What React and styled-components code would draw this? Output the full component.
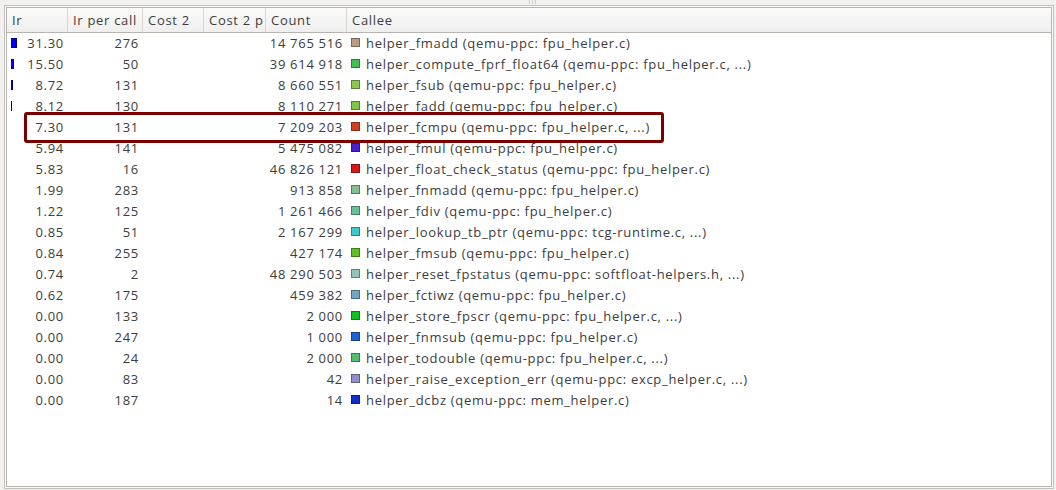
import React from "react";
import styled, { createGlobalStyle } from "styled-components";

const rows = [
  { ir: "31.30", bar: 6, per: "276", count: "14 765 516", color: "#b89c84", name: "helper_fmadd (qemu-ppc: fpu_helper.c)" },
  { ir: "15.50", bar: 3, per: "50", count: "39 614 918", color: "#40c050", name: "helper_compute_fprf_float64 (qemu-ppc: fpu_helper.c, ...)" },
  { ir: "8.72", bar: 2, per: "131", count: "8 660 551", color: "#8cc850", name: "helper_fsub (qemu-ppc: fpu_helper.c)" },
  { ir: "8.12", bar: 1, per: "130", count: "8 110 271", color: "#80c448", name: "helper_fadd (qemu-ppc: fpu_helper.c)" },
  { ir: "7.30", bar: 0, per: "131", count: "7 209 203", color: "#d04020", name: "helper_fcmpu (qemu-ppc: fpu_helper.c, ...)", marked: true },
  { ir: "5.94", bar: 0, per: "141", count: "5 475 082", color: "#4820d0", name: "helper_fmul (qemu-ppc: fpu_helper.c)" },
  { ir: "5.83", bar: 0, per: "16", count: "46 826 121", color: "#d81818", name: "helper_float_check_status (qemu-ppc: fpu_helper.c)" },
  { ir: "1.99", bar: 0, per: "283", count: "913 858", color: "#80c090", name: "helper_fnmadd (qemu-ppc: fpu_helper.c)" },
  { ir: "1.22", bar: 0, per: "125", count: "1 261 466", color: "#68c098", name: "helper_fdiv (qemu-ppc: fpu_helper.c)" },
  { ir: "0.85", bar: 0, per: "51", count: "2 167 299", color: "#40c8c8", name: "helper_lookup_tb_ptr (qemu-ppc: tcg-runtime.c, ...)" },
  { ir: "0.84", bar: 0, per: "255", count: "427 174", color: "#60c020", name: "helper_fmsub (qemu-ppc: fpu_helper.c)" },
  { ir: "0.74", bar: 0, per: "2", count: "48 290 503", color: "#90c4b8", name: "helper_reset_fpstatus (qemu-ppc: softfloat-helpers.h, ...)" },
  { ir: "0.62", bar: 0, per: "175", count: "459 382", color: "#70a8c0", name: "helper_fctiwz (qemu-ppc: fpu_helper.c)" },
  { ir: "0.00", bar: 0, per: "133", count: "2 000", color: "#10c020", name: "helper_store_fpscr (qemu-ppc: fpu_helper.c, ...)" },
  { ir: "0.00", bar: 0, per: "247", count: "1 000", color: "#2060d8", name: "helper_fnmsub (qemu-ppc: fpu_helper.c)" },
  { ir: "0.00", bar: 0, per: "24", count: "2 000", color: "#50c070", name: "helper_todouble (qemu-ppc: fpu_helper.c, ...)" },
  { ir: "0.00", bar: 0, per: "83", count: "42", color: "#9090c8", name: "helper_raise_exception_err (qemu-ppc: excp_helper.c, ...)" },
  { ir: "0.00", bar: 0, per: "187", count: "14", color: "#1030c8", name: "helper_dcbz (qemu-ppc: mem_helper.c)" },
];

const columns = ["Ir", "Ir per call", "Cost 2", "Cost 2 p", "Count", "Callee"];
const tabs = [51, 63, 85, 86, 89, 92];

export default function App() {
  return (
    <>
      <Global />
      <Page>
        <Grip><i /><i /><i /></Grip>
        <Frame>
          <Inner>
            <Header>
              {columns.map((c) => (
                <HeadCell key={c}>{c}</HeadCell>
              ))}
            </Header>
            <Body>
              {rows.map((r, i) => (
                <Row key={i}>
                  <IrCell>
                    {r.bar > 0 && <Bar style={{ width: r.bar }} />}
                    <span>{r.ir}</span>
                  </IrCell>
                  <Num>{r.per}</Num>
                  <Num />
                  <Num />
                  <Num>{r.count}</Num>
                  <Callee>
                    <Swatch $color={r.color} />
                    {r.name}
                  </Callee>
                  {r.marked && <Mark />}
                </Row>
              ))}
            </Body>
          </Inner>
        </Frame>
        <Tabs>
          {tabs.map((w, i) => (
            <Tab key={i} $w={w} $active={i === 1} />
          ))}
        </Tabs>
      </Page>
    </>
  );
}

const Global = createGlobalStyle`
  html, body { margin: 0; padding: 0; background: #f2f1f0; }
  body {
    font-family: "Open Sans", "Noto Sans", sans-serif;
    font-size: 13px;
    letter-spacing: 0.7px;
    color: #3c3c3c;
  }
`;

const Page = styled.div`
  height: 490px;
  overflow: hidden;
  display: flex;
  flex-direction: column;
  padding: 0 2px 0 4px;
`;

const Grip = styled.div`
  flex: none;
  height: 5px;
  display: flex;
  justify-content: center;
  gap: 2px;
  padding-left: 6px;
  i {
    display: block;
    width: 1px;
    height: 4px;
    background: #cfccc7;
  }
`;

const Frame = styled.div`
  flex: none;
  height: 484px;
  box-sizing: border-box;
  border: 1px solid #c2bfba;
  background: #fbfbfa;
  padding: 1px;
`;

const Inner = styled.div`
  height: 100%;
  box-sizing: border-box;
  border: 1px solid #b8b5b0;
  background: #ffffff;
  display: flex;
  flex-direction: column;
`;

const grid = `
  display: grid;
  grid-template-columns: 61px 75px 61px 62px 81px 1fr;
`;

const Header = styled.div`
  ${grid}
  flex: none;
  height: 25px;
  box-sizing: border-box;
  border-bottom: 1px solid #b8b5b0;
  background: linear-gradient(#fbfbfb, #f0efee);
`;

const HeadCell = styled.div`
  display: flex;
  align-items: center;
  padding-left: 5px;
  border-right: 1px solid #dad7d2;
  color: #3c3c3c;
  white-space: nowrap;
  overflow: hidden;
  &:last-child { border-right: none; }
`;

const Body = styled.div`
  flex: 1;
`;

const Row = styled.div`
  ${grid}
  position: relative;
  height: 21px;
  box-sizing: border-box;
  padding-bottom: 2px;
  align-items: center;
  white-space: nowrap;
`;

const IrCell = styled.div`
  display: flex;
  align-items: center;
  padding: 0 4px;
  span { margin-left: auto; }
`;

const Bar = styled.div`
  height: 10px;
  box-sizing: border-box;
  background: #0000ee;
  border: 1px solid #00008a;
  border-left-width: 0;
`;

const Num = styled.div`
  text-align: right;
  padding-right: 4px;
`;

const Callee = styled.div`
  display: flex;
  align-items: center;
  gap: 6px;
  padding-left: 4px;
`;

const Swatch = styled.span`
  width: 9px;
  height: 9px;
  box-sizing: border-box;
  background: ${(p) => p.$color};
  border: 1px solid rgba(0, 0, 0, 0.35);
  flex: none;
`;

const Mark = styled.div`
  position: absolute;
  left: 17px;
  top: -5px;
  width: 640px;
  height: 31px;
  box-sizing: border-box;
  border: 3px solid #7a0000;
  border-radius: 3px;
  pointer-events: none;
`;

const Tabs = styled.div`
  flex: none;
  display: flex;
  padding-top: 1px;
`;

const Tab = styled.div`
  width: ${(p) => p.$w}px;
  height: 20px;
  box-sizing: border-box;
  border: 1px solid #b8b5b0;
  border-bottom: none;
  border-left-width: 0;
  background: ${(p) => (p.$active ? "#fbfbfa" : "#e8e6e3")};
  &:first-child { border-left-width: 1px; }
`;
